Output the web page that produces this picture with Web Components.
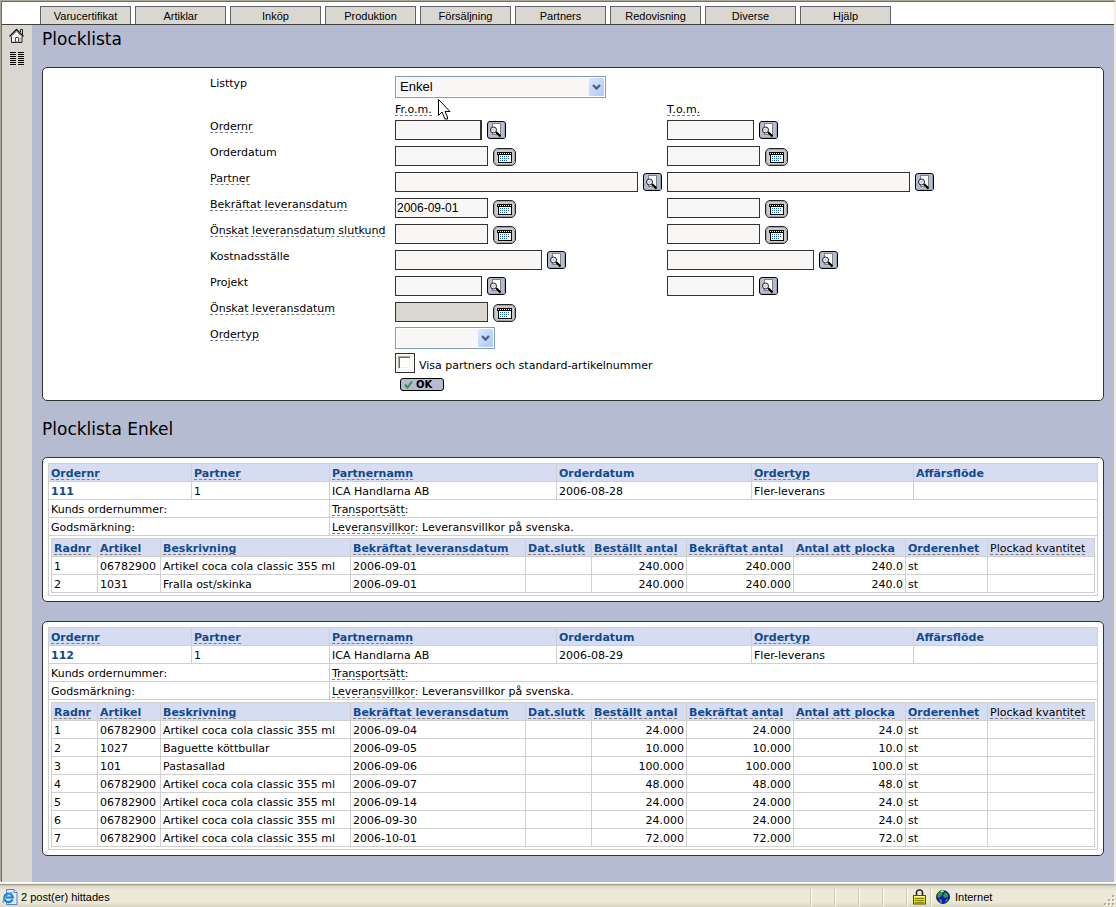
<!DOCTYPE html>
<html lang="sv">
<head>
<meta charset="utf-8">
<title>Plocklista</title>
<style>
  body { margin: 0; font: 11px/13px "DejaVu Sans", Verdana, sans-serif; color: #000; }
  content-panel + content-panel { margin-top: 19px; }
</style>
</head>
<body>
<app-window>
  <tab-bar slot="tabs">
    <tab-item>Varucertifikat</tab-item>
    <tab-item>Artiklar</tab-item>
    <tab-item>Inköp</tab-item>
    <tab-item>Produktion</tab-item>
    <tab-item>Försäljning</tab-item>
    <tab-item>Partners</tab-item>
    <tab-item>Redovisning</tab-item>
    <tab-item>Diverse</tab-item>
    <tab-item>Hjälp</tab-item>
  </tab-bar>
  <side-bar slot="side"></side-bar>
  <page-title>Plocklista</page-title>
  <content-panel><pick-form></pick-form></content-panel>
  <page-title level="2">Plocklista Enkel</page-title>
  <content-panel><pick-order order="111"></pick-order></content-panel>
  <content-panel><pick-order order="112"></pick-order></content-panel>
  <status-bar slot="status">2 post(er) hittades</status-bar>
</app-window>

<script>
const define = (name, html) => customElements.define(name, class extends HTMLElement {
  constructor() {
    super();
    this.attachShadow({ mode: 'open' });
  }
  connectedCallback() {
    if (this.shadowRoot.childNodes.length) return;
    const t = document.createElement('template');
    t.innerHTML = typeof html === 'function' ? html(this) : html;
    this.shadowRoot.append(t.content.cloneNode(true));
  }
});

const TERM = `.term { display: inline-block; line-height: 11px; border-bottom: 1px dashed #808080; }`;

/* ---------- window frame ---------- */
define('app-window', `
<style>
  :host { display: flex; flex-direction: column; min-height: 100vh; background: #ece9d8; }
  .view { flex: 1; display: flex; flex-direction: column; background: #b5bbd1;
          border-top: 1px solid #716f64; border-left: 1px solid #716f64; border-right: 2px solid #f1efe2;
          box-shadow: -1px -1px 0 #aca899; margin: 1px 0 0 1px; }
  .row { flex: 1; display: flex; }
  main { flex: 1; min-width: 0; padding: 4px 10px 26px; }
</style>
<div class="view">
  <slot name="tabs"></slot>
  <div class="row"><slot name="side"></slot><main><slot></slot></main></div>
</div>
<slot name="status"></slot>`);

define('tab-bar', `
<style>
  :host { display: block; background: #fff; border-bottom: 1px solid #404040; }
  nav { display: flex; gap: 4px; padding: 4px 0 0 38px; }
</style>
<nav><slot></slot></nav>`);

define('tab-item', `
<style>
  :host { display: block; width: 91px; }
  a { display: block; box-sizing: border-box; height: 18px; padding-top: 3px; text-align: center;
      background: #dad7d0; border: 1px solid #606468; border-bottom: 0;
      font: 11px/13px "Liberation Sans", Arial, sans-serif; color: #000; text-decoration: none; }
</style>
<a href="#"><slot></slot></a>`);

define('side-bar', `
<style>
  :host { display: block; width: 30px; flex: none; background: #dad7d0; }
  nav { display: flex; flex-direction: column; gap: 8px; padding: 3px 0 0 7px; }
  a, svg { display: block; }
</style>
<nav>
  <a href="#" aria-label="Hem"><svg width="16" height="16" viewBox="0 0 16 16">
    <path d="M2.500 8v6.500h10V8L7.500 3z" fill="#f4f4f4"/>
    <path d="M3 14h9V9z" fill="#c4c4c4"/>
    <path d="M11.500 4V1.500h2V7" fill="#ddd" stroke="#222"/>
    <path d="M.500 8.500l7-7 7 7" fill="none" stroke="#111" stroke-width="1.400"/>
    <path d="M2.500 8.500v6h10.500v-6" fill="none" stroke="#222"/>
    <path d="M3.500 7.500l4-4 4 4" fill="none" stroke="#888"/>
    <path d="M6.500 14V9.500h3V14z" fill="#fff" stroke="#555"/>
  </svg></a>
  <a href="#" aria-label="Lista"><svg width="16" height="14" viewBox="0 0 16 14" shape-rendering="crispEdges">
    <path d="M1 .500h6M9 .500h6M1 2.500h6M9 2.500h6M1 4.500h6M9 4.500h6M1 6.500h6M9 6.500h6M1 8.500h6M9 8.500h6M1 10.500h6M9 10.500h6M1 12.500h6M9 12.500h6" stroke="#000"/>
  </svg></a>
</nav>`);

define('page-title', el => {
  const h = el.getAttribute('level') === '2' ? 'h2' : 'h1';
  return `
<style>
  :host { display: block; }
  :host([level]) { padding-top: 18px; }
  h1, h2 { margin: 0 0 18px; font-size: 17px; line-height: 20px; font-weight: 400; }
</style>
<${h}><slot></slot></${h}>`;
});

define('content-panel', `
<style>
  :host { display: block; background: #fff; border: 1px solid #333; border-radius: 5px; padding: 5px; }
</style>
<slot></slot>`);

/* ---------- form controls ---------- */
define('icon-button', el => {
  const search = `<svg width="19" height="18" viewBox="0 0 19 18">
    <rect x=".500" y=".500" width="18" height="17" rx="2.500" fill="#b5bbd1" stroke="#000"/>
    <path d="M17.500 3v13.500H3" fill="none" stroke="#9aa1bb"/>
    <rect x="5.500" y="2.500" width="8" height="11" fill="#fff" stroke="#808080"/>
    <path d="M9 11l4.500 4.500" stroke="#000" stroke-width="2.200"/>
    <circle cx="6.500" cy="9" r="3" fill="#eee" stroke="#222"/>
    <path d="M5 9h3M6.500 7.500v3" stroke="#ccc"/>
  </svg>`;
  const dots = [7, 9, 11].map(y => [8, 10, 12, 14, 16].map(x =>
    (y < 11 || x < 16) ? `<rect x="${x - 1}" y="${y + 1}" width="1" height="1" fill="#1c5cc0"/>` : '').join('')).join('');
  const beads = [5, 7, 9, 11, 13, 15, 17].map(x => `<rect x="${x}" y="5" width="1" height="1" fill="#fff"/>`).join('');
  const cal = `<svg width="23" height="18" viewBox="0 0 23 18">
    <rect x=".500" y=".500" width="22" height="17" rx="4.500" fill="#c9cad2" stroke="#222"/>
    <rect x="1.500" y="1.500" width="20" height="15" rx="3.500" fill="none" stroke="#a2a3a8"/>
    <g shape-rendering="crispEdges"><rect x="5" y="6" width="14" height="9" fill="#000"/>
    <rect x="6" y="7" width="12" height="7" fill="#fff"/>
    <rect x="4" y="4" width="15" height="3" fill="#000"/>${beads}${dots}</g>
  </svg>`;
  const isCal = el.getAttribute('icon') === 'calendar';
  return `
<style>
  :host { display: block; margin-top: ${isCal ? 2 : 1}px; }
  button { display: block; padding: 0; border: 0; background: none; }
  svg { display: block; }
</style>
<button type="button" aria-label="${isCal ? 'Välj datum' : 'Sök'}">${isCal ? cal : search}</button>`;
});

define('drop-down', el => `
<style>
  :host { display: block; position: relative; height: 22px; margin-top: -1px; }
  select { appearance: none; display: block; box-sizing: border-box; width: 100%; height: 22px; margin: 0;
    padding: 0 18px 0 4px; border: 1px solid #7f9db9; border-radius: 0; outline: 0;
    background: #f8f7f5; box-shadow: inset 0 0 0 1px #fff; color: #000;
    font: 13px/18px "Liberation Sans", Arial, sans-serif; }
  svg { position: absolute; right: 2px; top: 2px; pointer-events: none; }
</style>
<select aria-label="${el.getAttribute('label')}"><option>${el.getAttribute('value') || ''}</option></select>
<svg width="15" height="18" viewBox="0 0 15 18">
  <defs><linearGradient id="g" x2="1" y2="1"><stop stop-color="#dbe6fe"/><stop offset="1" stop-color="#aec8f7"/></linearGradient></defs>
  <rect width="15" height="18" rx="1.500" fill="url(#g)"/>
  <path d="M4 7l3.500 3.500L11 7" fill="none" stroke="#4d6185" stroke-width="2.400"/>
</svg>`);

const WIDTHS = { small: 87, date: 93, medium: 147, large: 243 };
define('lookup-field', el => {
  const size = el.getAttribute('size');
  return `
<style>
  :host { display: flex; align-items: flex-start; gap: 5px; }
  input { box-sizing: border-box; width: ${WIDTHS[size]}px; height: 20px; margin: 0; padding: 0 1px;
    border: 1px solid #333; border-radius: 0; outline: 0; background: #f8f7f5; color: #000;
    font: 12px/18px "Liberation Sans", Arial, sans-serif; }
  input:disabled { background: #dad7d0; }
  :host([current]) input { border-right-width: 2px; }
</style>
<input type="text" aria-label="${el.getAttribute('label')}" value="${el.getAttribute('value') || ''}"${el.hasAttribute('off') ? ' disabled' : ''}>
<icon-button icon="${size === 'date' ? 'calendar' : 'search'}"></icon-button>`;
});

const FIELDS = [
  ['Ordernr', 1, 'small', 'small'],
  ['Orderdatum', 0, 'date', 'date'],
  ['Partner', 1, 'large', 'large'],
  ['Bekräftat leveransdatum', 1, 'date', 'date', '2006-09-01'],
  ['Önskat leveransdatum slutkund', 1, 'date', 'date'],
  ['Kostnadsställe', 0, 'medium', 'medium'],
  ['Projekt', 0, 'small', 'small'],
  ['Önskat leveransdatum', 1, 'date', null]
];

define('pick-form', () => `
<style>
  :host { display: block; position: relative; width: 726px; margin: 0 auto; padding: 4px 0; }
  form { display: grid; grid-template-columns: 185px 272px 1fr; align-items: start;
         grid-template-rows: 26px 17px repeat(9, 26px) 24px 13px; white-space: nowrap; }
  ${TERM}
  .wide { width: 211px; }
  .narrow { width: 100px; }
  .check { grid-column: 2 / 4; display: flex; align-items: center; gap: 4px; margin-top: -1px; }
  .check label { padding-top: 4px; }
  .check input { appearance: none; display: grid; place-items: start; box-sizing: border-box; width: 20px; height: 20px;
    margin: 0; padding: 2px; border: 1px solid #333; background: #f8f7f5; }
  .check input::before { content: ""; box-sizing: border-box; width: 13px; height: 13px; background: #fff;
    border: 1px solid; border-color: #aca899 #fff #fff #aca899; box-shadow: inset 1px 1px 0 #716f64, inset -1px -1px 0 #f1efe2; }
  .ok { display: flex; align-items: center; gap: 3px; box-sizing: border-box; width: 44px; height: 13px; margin: 0 5px;
    padding: 0 3px; border: 1px solid #000; border-radius: 3px; background: #b5bbd1; color: #000;
    font: bold 10px/11px "DejaVu Sans", Verdana, sans-serif; }
  .actions { grid-column: 2; }
  .pointer { position: absolute; left: 228px; top: 26px; }
</style>
<form onsubmit="return false">
  <span>Listtyp</span><drop-down class="wide" label="Listtyp" value="Enkel"></drop-down><span></span>
  <span></span><span><span class="term">Fr.o.m.</span></span><span><span class="term">T.o.m.</span></span>
  ${FIELDS.map(([name, term, from, to, value], i) => `
  <span>${term ? `<span class="term">${name}</span>` : name}</span>
  <lookup-field size="${from}" label="${name} fr.o.m." value="${value || ''}"${i === 0 ? ' current' : ''}${to ? '' : ' off'}></lookup-field>
  ${to ? `<lookup-field size="${to}" label="${name} t.o.m."></lookup-field>` : '<span></span>'}`).join('')}
  <span><span class="term">Ordertyp</span></span><drop-down class="narrow" label="Ordertyp"></drop-down><span></span>
  <div class="check"><input type="checkbox" id="show"><label for="show">Visa partners och standard-artikelnummer</label></div>
  <div class="actions"><button class="ok"><svg width="9" height="9" viewBox="0 0 9 9"><path d="M1 4.500l2.500 3L8 1.500" fill="none" stroke="#2c9a3c" stroke-width="2"/></svg>OK</button></div>
</form>
<svg class="pointer" width="13" height="21" viewBox="0 0 13 21">
  <path d="M.500 .500v16l3.500-3.500 3 7h2.500v-2l-2.500-5.500h5z" fill="#fff" stroke="#000"/>
</svg>`);

/* ---------- orders ---------- */
const COLA = ['06782900', 'Artikel coca cola classic 355 ml'];
const ORDERS = {
  111: { date: '2006-08-28', lines: [
    [...COLA, '2006-09-01', '240.0'],
    ['1031', 'Fralla ost/skinka', '2006-09-01', '240.0']] },
  112: { date: '2006-08-29', lines: [
    [...COLA, '2006-09-04', '24.0'],
    ['1027', 'Baguette köttbullar', '2006-09-05', '10.0'],
    ['101', 'Pastasallad', '2006-09-06', '100.0'],
    [...COLA, '2006-09-07', '48.0'],
    [...COLA, '2006-09-14', '24.0'],
    [...COLA, '2006-09-30', '24.0'],
    [...COLA, '2006-10-01', '72.0']] }
};
const cols = list => `<colgroup>${list.map(w => `<col style="width:${w}px">`).join('')}<col></colgroup>`;
const term = s => `<span class="term">${s}</span>`;

define('pick-order', el => {
  const no = el.getAttribute('order');
  const { date, lines } = ORDERS[no];
  return `
<style>
  :host { display: block; }
  table { width: 100%; table-layout: fixed; border-collapse: collapse; font-size: 11px; line-height: 13px; }
  th, td { height: 13px; padding: 3px 2px 1px; border: 1px solid #d0d0d0; text-align: left; vertical-align: top;
           white-space: nowrap; font-weight: 400; }
  th { background: #d6dcf2; color: #124a8c; font-weight: 700; }
  th.plain { color: #000; font-weight: 400; }
  a { color: #124a8c; font-weight: 700; text-decoration: none; }
  .num { text-align: right; }
  .nest { padding: 2px; }
  ${TERM}
</style>
<table>
  ${cols([143, 138, 227, 195, 162])}
  <tr><th>${term('Ordernr')}</th><th>${term('Partner')}</th><th>${term('Partnernamn')}</th><th>Orderdatum</th><th>${term('Ordertyp')}</th><th>Affärsflöde</th></tr>
  <tr><td><a href="#">${no}</a></td><td>1</td><td>ICA Handlarna AB</td><td>${date}</td><td>Fler-leverans</td><td></td></tr>
  <tr><td colspan="2">Kunds ordernummer:</td><td colspan="4">${term('Transportsätt')}:</td></tr>
  <tr><td colspan="2">Godsmärkning:</td><td colspan="4">${term('Leveransvillkor')}: Leveransvillkor på svenska.</td></tr>
  <tr><td class="nest" colspan="6"><table>
    ${cols([46, 63, 190, 175, 66, 95, 107, 112, 82])}
    <tr>${['Radnr', 'Artikel', 'Beskrivning', 'Bekräftat leveransdatum', 'Dat.slutk', 'Beställt antal', 'Bekräftat antal', 'Antal att plocka', 'Orderenhet'].map(h => `<th>${term(h)}</th>`).join('')}<th class="plain">${term('Plockad kvantitet')}</th></tr>
    ${lines.map(([art, text, day, qty], i) => `<tr><td>${i + 1}</td><td>${art}</td><td>${text}</td><td>${day}</td><td></td><td class="num">${qty}00</td><td class="num">${qty}00</td><td class="num">${qty}</td><td>st</td><td></td></tr>`).join('')}
  </table></td></tr>
</table>`;
});

/* ---------- status bar ---------- */
define('status-bar', `
<style>
  :host { display: flex; align-items: center; box-sizing: border-box; height: 25px; padding-top: 5px;
    font: 11px/13px "Liberation Sans", Arial, sans-serif;
    background: linear-gradient(#fff 0 1px, #f1efe2 1px 2px, #a5a294 2px 3px, #c5c2b2 3px 4px, #dfdccb 4px 5px, #ece9d8 8px, #ece9d8 20px, #d8d4c0 25px); }
  svg { display: block; flex: none; }
  .page { margin: 0 3px 0 2px; }
  .text { flex: 1; }
  .cell { box-sizing: border-box; width: 24px; height: 17px; border-left: 1px solid #c9c6b5; box-shadow: inset 1px 0 0 #fff; }
  .cell svg { margin-left: 6px; }
  .zone { display: flex; align-items: center; gap: 5px; width: 174px; padding-left: 5px; }
  .zone svg { margin: 0; }
  .grip { margin: 8px 0 0; }
</style>
<svg class="page" width="16" height="16" viewBox="0 0 16 16">
  <path d="M4.500 .500h7.500l3 3v12h-10.500z" fill="#e0ebfb" stroke="#5b7fc0"/>
  <path d="M12 .500v3h3" fill="#fff" stroke="#5b7fc0"/>
  <circle cx="6.500" cy="8.500" r="5" fill="#cfe6fb"/>
  <path d="M10.500 10.500A4.300 4.300 0 1 1 10.800 8.500H4" fill="none" stroke="#1b7fd4" stroke-width="2.200"/>
  <path d="M1.500 14c-2-3 4-10 9-10.500" fill="none" stroke="#3b9ae0" stroke-width="1.200"/>
</svg>
<span class="text"><slot></slot></span>
<span class="cell"></span><span class="cell"></span><span class="cell"></span><span class="cell"></span>
<span class="cell"><svg width="13" height="16" viewBox="0 0 13 16">
  <path d="M3.500 7V3.500q0-2 2-2.500h2q2 .500 2 2.500V7" fill="none" stroke="#222" stroke-width="1.600"/>
  <rect x=".500" y="6.500" width="12" height="8.500" fill="#e6e000" stroke="#555200"/>
  <path d="M2 9.500h9M2 11.500h9M2 13.500h9" stroke="#8a8600"/>
  <path d="M1 7.500h11" stroke="#ffff90"/>
</svg></span>
<span class="cell zone"><svg width="14" height="14" viewBox="0 0 14 14">
  <circle cx="7" cy="7" r="6.500" fill="#1414c8" stroke="#111" stroke-width=".800"/>
  <path d="M2 3l3-2 2 1-1 3-3 3-2-1zM9 2l3 2v3l-3 1-2-2 1-2zM3 9l3 1v3H4zM10 9l2 0-1 2.500-2 1z" fill="#1fa82c"/>
  <path d="M4 1.500l2-1h3L7 2z" fill="#e8f8e8"/>
</svg>Internet</span>
<svg class="grip" width="12" height="13" viewBox="0 0 12 13" shape-rendering="crispEdges">
  <path d="M9 1h2v2H9zM5 5h2v2H5zM9 5h2v2H9zM1 9h2v2H1zM5 9h2v2H5zM9 9h2v2H9z" fill="#fff"/>
  <path d="M8 0h2v2H8zM4 4h2v2H4zM8 4h2v2H8zM0 8h2v2H0zM4 8h2v2H4zM8 8h2v2H8z" fill="#b0ac98"/>
</svg>`);
</script>
</body>
</html>
